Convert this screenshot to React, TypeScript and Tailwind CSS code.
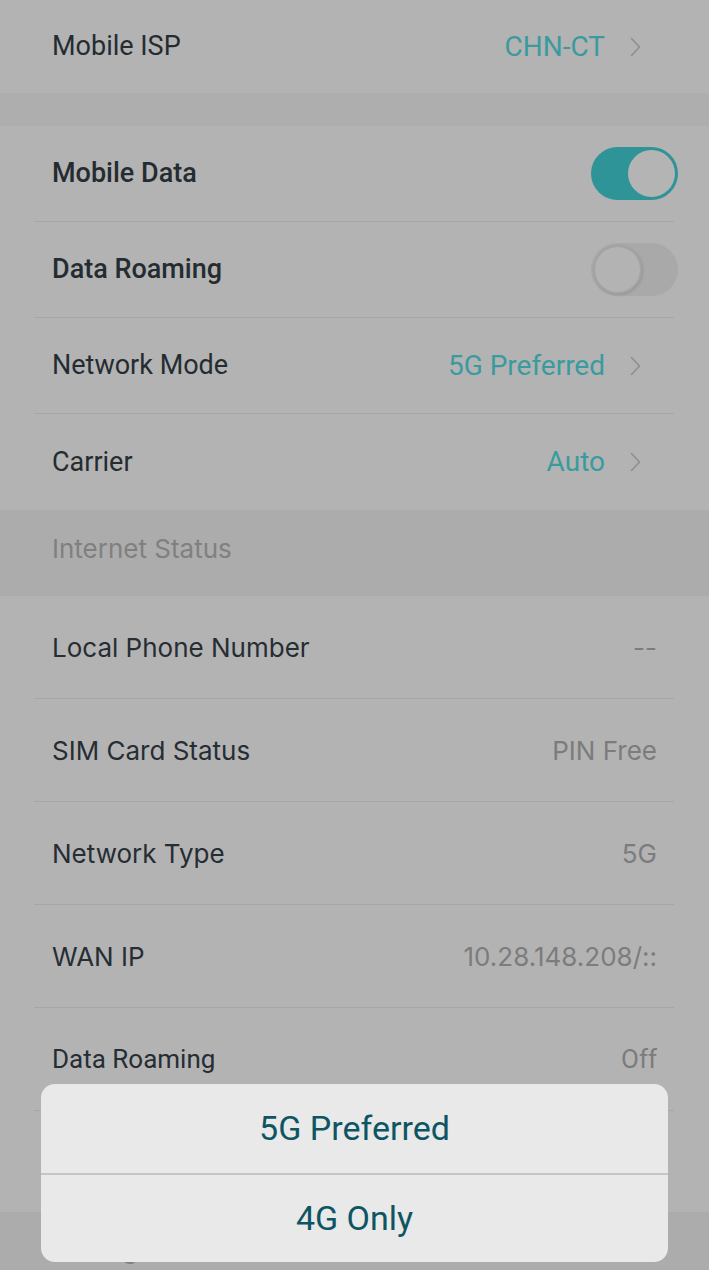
import React from "react";

const roboto = "font-['Roboto','Liberation_Sans',sans-serif]";
const inter = "font-['Inter','Noto_Sans',sans-serif]";

function Chevron() {
  return (
    <svg width="11" height="20" viewBox="0 0 11 20" className="ml-[25px] shrink-0">
      <path d="M1.5 1.5 L9.5 10 L1.5 18.5" fill="none" stroke="#8f8f8f" strokeWidth="1.6" strokeLinecap="round" strokeLinejoin="round" />
    </svg>
  );
}

function Toggle({ on }: { on: boolean }) {
  if (on) {
    return (
      <div className="-mr-[4px] flex h-[53px] w-[87px] items-center justify-end rounded-full bg-[#2f9498] p-[3px]">
        <div className="h-[47px] w-[47px] rounded-full bg-[#b4b4b4]" />
      </div>
    );
  }
  return (
    <div className="-mr-[4px] flex h-[53px] w-[87px] items-center justify-start rounded-full bg-[#a9a9a9] p-[2px]">
      <div className="h-[49px] w-[49px] rounded-full border-2 border-[#a3a3a3] bg-[#b3b3b3] shadow-[1px_1px_3px_rgba(0,0,0,0.12)]" />
    </div>
  );
}

function TopRow({
  label,
  value,
  toggle,
  medium,
  border = true,
}: {
  label: string;
  value?: string;
  toggle?: boolean;
  medium?: boolean;
  border?: boolean;
}) {
  const isToggle = toggle !== undefined;
  return (
    <div
      className={`ml-[34px] mr-[35px] flex h-[96px] items-center pl-[18px] ${isToggle ? "pr-0" : "pr-[33px]"} ${
        border ? "border-b border-[#a7a7a7]" : ""
      }`}
    >
      <span className={`${roboto} flex-1 text-[27px] text-[#252c31] ${medium ? "font-medium" : ""}`}>{label}</span>
      {isToggle ? (
        <Toggle on={toggle as boolean} />
      ) : (
        <>
          <span className={`${roboto} text-[28px] text-[#3a9b9f]`}>{value}</span>
          <Chevron />
        </>
      )}
    </div>
  );
}

function InfoRow({ label, value, font }: { label: string; value: string; font: string }) {
  return (
    <div className="ml-[34px] mr-[35px] flex h-[103px] items-center border-b border-[#a7a7a7] pl-[18px] pr-[17px]">
      <span className={`${font} flex-1 text-[26px] text-[#262d33]`}>{label}</span>
      <span className={`${font} text-[26px] text-[#7c7c7c]`}>{value}</span>
    </div>
  );
}

export default function App() {
  return (
    <div className="relative h-[1270px] w-full overflow-hidden bg-[#b3b3b3]">
      {/* Mobile ISP */}
      <div className="flex h-[93px] items-center pl-[52px] pr-[68px]">
        <span className={`${roboto} flex-1 text-[27px] text-[#252c31]`}>Mobile ISP</span>
        <span className={`${roboto} text-[28px] text-[#3a9b9f]`}>CHN-CT</span>
        <Chevron />
      </div>
      <div className="h-[33px] bg-[#aeaeae]" />

      <TopRow label="Mobile Data" toggle={true} medium />
      <TopRow label="Data Roaming" toggle={false} medium />
      <TopRow label="Network Mode" value="5G Preferred" />
      <TopRow label="Carrier" value="Auto" border={false} />

      <div className="flex h-[86px] items-center bg-[#acacac] pb-[9px] pl-[52px]">
        <span className={`${inter} text-[26px] text-[#808080]`}>Internet Status</span>
      </div>

      <InfoRow label="Local Phone Number" value="--" font={inter} />
      <InfoRow label="SIM Card Status" value="PIN Free" font={inter} />
      <InfoRow label="Network Type" value="5G" font={inter} />
      <InfoRow label="WAN IP" value="10.28.148.208/::" font={inter} />
      <InfoRow label="Data Roaming" value="Off" font={roboto} />
      <InfoRow label="Data Usage" value="--" font={inter} />

      <div className="-mt-[2px] flex h-[60px] items-start bg-[#acacac] pl-[52px] pt-[20px]">
        <span className={`${inter} text-[26px] leading-[34px] text-[#808080]`}>Settings</span>
      </div>

      {/* Action sheet */}
      <div className="absolute left-[41px] top-[1084px] flex w-[627px] flex-col overflow-hidden rounded-[14px] bg-[#e9e9e9]">
        <div className="flex h-[89px] items-center justify-center">
          <span className={`${roboto} text-[34px] text-[#0e5563]`}>5G Preferred</span>
        </div>
        <div className="h-[2px] bg-[#c5c5c5]" />
        <div className="flex h-[87px] items-center justify-center">
          <span className={`${roboto} text-[34px] text-[#0e5563]`}>4G Only</span>
        </div>
      </div>
    </div>
  );
}
